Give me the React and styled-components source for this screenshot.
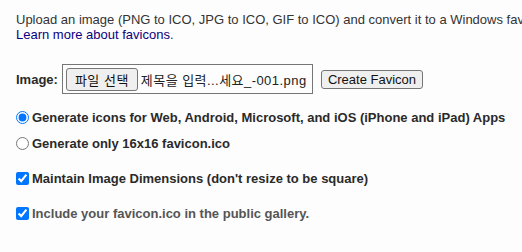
import React from 'react';
import styled, { createGlobalStyle } from 'styled-components';

const Global = createGlobalStyle`
  html, body {
    margin: 0;
    background: #fdfdfd;
  }
  body {
    font-family: "Liberation Sans", Arial, sans-serif;
    font-size: 13px;
    color: #333;
  }
`;

const Page = styled.div`
  padding: 12px 16px;
  width: 522px;
  box-sizing: border-box;
  overflow: hidden;
`;

const Intro = styled.p`
  margin: 0;
  line-height: 15px;
  white-space: nowrap;
  color: #333;
`;

const Link = styled.a`
  color: #0b0080;
  text-decoration: none;
`;

const UploadRow = styled.div`
  display: flex;
  align-items: center;
  margin-top: 22px;
  height: 30px;
`;

const Label = styled.span`
  font-weight: bold;
  color: #2a2a2a;
  margin-right: 4px;
`;

const FileBox = styled.div`
  display: flex;
  align-items: center;
  gap: 3px;
  box-sizing: border-box;
  width: 251px;
  height: 30px;
  padding: 0 3px;
  border: 1px solid #767676;
  font-family: "Liberation Sans", "Noto Sans CJK KR", sans-serif;
  color: #222;
  white-space: nowrap;
  overflow: hidden;
`;

const FileName = styled.span`
  letter-spacing: 0.45px;
`;

const Button = styled.span`
  display: inline-flex;
  align-items: center;
  justify-content: center;
  box-sizing: border-box;
  height: ${p => p.$h}px;
  padding: 0 ${p => p.$px}px;
  background: #efefef;
  border: 1px solid #767676;
  border-radius: 3px;
  color: #111;
  font-size: 13px;
  font-family: "Liberation Sans", "Noto Sans CJK KR", sans-serif;
  letter-spacing: ${p => p.$ls || 0}px;
  flex-shrink: 0;
`;

const Submit = styled(Button)`
  margin-left: 8px;
`;

const Options = styled.div`
  margin-top: 10px;
  display: flex;
  flex-direction: column;
`;

const OptionRow = styled.label`
  display: flex;
  align-items: center;
  height: ${p => p.$h}px;
  margin-top: ${p => p.$mt || 0}px;
  font-weight: bold;
  color: ${p => p.$muted ? '#555' : '#2a2a2a'};
  white-space: nowrap;

  input {
    margin: 0 3px 0 0;
    width: 13px;
    height: 13px;
    accent-color: #0075ff;
  }
`;

export default function App() {
  return (
    <>
      <Global />
      <Page>
        <Intro>
          Upload an image (PNG to ICO, JPG to ICO, GIF to ICO) and convert it to a Windows favicon (.ico) and App Icons.
          <br />
          <Link href="#">Learn more about favicons</Link>.
        </Intro>
        <UploadRow>
          <Label>Image:</Label>
          <FileBox>
            <Button $h={23} $px={8} $ls={0.5}>파일 선택</Button>
            <FileName>제목을 입력...세요_-001.png</FileName>
          </FileBox>
          <Submit $h={19} $px={6}>Create Favicon</Submit>
        </UploadRow>
        <Options>
          <OptionRow $h={26}>
            <input type="radio" name="mode" defaultChecked />
            Generate icons for Web, Android, Microsoft, and iOS (iPhone and iPad) Apps
          </OptionRow>
          <OptionRow $h={26}>
            <input type="radio" name="mode" />
            Generate only 16x16 favicon.ico
          </OptionRow>
          <OptionRow $h={36} $mt={4}>
            <input type="checkbox" defaultChecked />
            Maintain Image Dimensions (don't resize to be square)
          </OptionRow>
          <OptionRow $h={34} $muted>
            <input type="checkbox" defaultChecked />
            Include your favicon.ico in the public gallery.
          </OptionRow>
        </Options>
      </Page>
    </>
  );
}
